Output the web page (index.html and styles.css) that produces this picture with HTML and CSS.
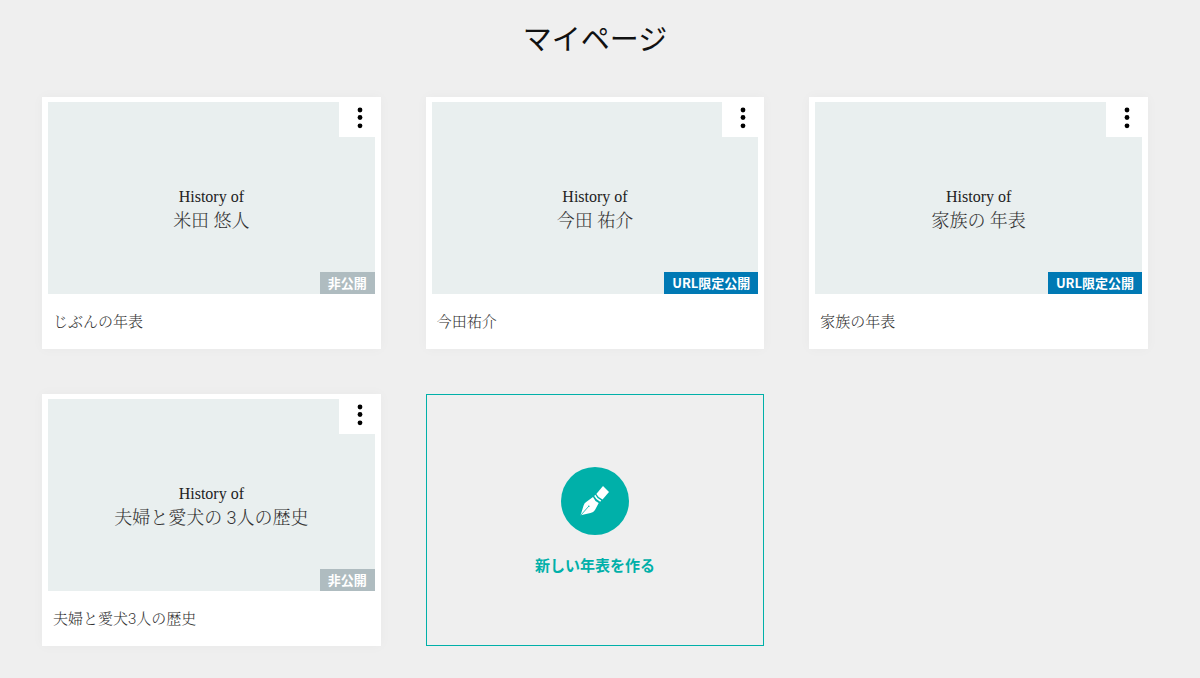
FILE: index.html
```html
<!DOCTYPE html>
<html lang="ja">
<head>
<meta charset="utf-8">
<meta name="viewport" content="width=device-width, initial-scale=1">
<title>マイページ</title>
<link rel="stylesheet" href="styles.css">
</head>
<body>
<main class="page">
  <h1 class="page-title">マイページ</h1>
  <div class="grid">
    <article class="card">
      <div class="thumb">
        <p class="thumb-label">History of</p>
        <p class="thumb-name">米田 悠人</p>
        <button class="menu" type="button" aria-label="メニュー"><svg class="dots" viewBox="0 0 6 22"><circle cx="3" cy="3" r="2.4"/><circle cx="3" cy="10.5" r="2.4"/><circle cx="3" cy="18.8" r="2.4"/></svg></button>
        <span class="badge">非公開</span>
      </div>
      <h2 class="caption">じぶんの年表</h2>
    </article>
    <article class="card">
      <div class="thumb">
        <p class="thumb-label">History of</p>
        <p class="thumb-name">今田 祐介</p>
        <button class="menu" type="button" aria-label="メニュー"><svg class="dots" viewBox="0 0 6 22"><circle cx="3" cy="3" r="2.4"/><circle cx="3" cy="10.5" r="2.4"/><circle cx="3" cy="18.8" r="2.4"/></svg></button>
        <span class="badge badge-url">URL限定公開</span>
      </div>
      <h2 class="caption">今田祐介</h2>
    </article>
    <article class="card">
      <div class="thumb">
        <p class="thumb-label">History of</p>
        <p class="thumb-name">家族の 年表</p>
        <button class="menu" type="button" aria-label="メニュー"><svg class="dots" viewBox="0 0 6 22"><circle cx="3" cy="3" r="2.4"/><circle cx="3" cy="10.5" r="2.4"/><circle cx="3" cy="18.8" r="2.4"/></svg></button>
        <span class="badge badge-url">URL限定公開</span>
      </div>
      <h2 class="caption">家族の年表</h2>
    </article>
    <article class="card">
      <div class="thumb">
        <p class="thumb-label">History of</p>
        <p class="thumb-name">夫婦と愛犬の 3人の歴史</p>
        <button class="menu" type="button" aria-label="メニュー"><svg class="dots" viewBox="0 0 6 22"><circle cx="3" cy="3" r="2.4"/><circle cx="3" cy="10.5" r="2.4"/><circle cx="3" cy="18.8" r="2.4"/></svg></button>
        <span class="badge">非公開</span>
      </div>
      <h2 class="caption">夫婦と愛犬3人の歴史</h2>
    </article>
    <a class="create" href="#new">
      <svg class="create-icon" viewBox="0 0 68 68" aria-hidden="true">
        <circle cx="34" cy="34" r="34" fill="#00b0a9"/>
        <path d="M42 19 48 25 41.5 32.5Q37.5 31 35.3 27Z" fill="#fff"/>
        <path d="M34.3 27.8Q36.2 31.8 40.3 33.5L39.2 34.7Q35 33 33.2 29Z" fill="#fff"/>
        <path d="M32 30Q33.5 34 37.7 36L34 43Q32.5 45.5 29.5 46L19.6 48.3 22.6 38.5Q23.3 36 25.5 34.8Z" fill="#fff"/>
        <path d="M20 48 27.5 39.5" fill="none" stroke="#00b0a9" stroke-width=".8"/>
        <circle cx="27.8" cy="39.2" r=".8" fill="#00b0a9"/>
      </svg>
      <span class="create-label">新しい年表を作る</span>
    </a>
  </div>
</main>
</body>
</html>
```
FILE: styles.css
```css
* {
  box-sizing: border-box;
}

body {
  margin: 0;
  background: #efefef;
  color: #111;
  font-family: "Noto Sans CJK JP", sans-serif;
}

.page {
  padding: 15px 52px 32px 42px;
}

.page-title {
  margin: 0 0 38px;
  font-size: 29px;
  line-height: 44px;
  font-weight: 400;
  text-align: center;
}

.grid {
  display: grid;
  grid-template-columns: repeat(3, minmax(0, 1fr));
  gap: 45px;
}

.card {
  display: flex;
  flex-direction: column;
  padding: 5px 6px 0;
  background: #fff;
  box-shadow: 0 0 12px rgba(0, 0, 0, 0.03);
}

.thumb {
  position: relative;
  display: flex;
  flex-direction: column;
  align-items: center;
  justify-content: center;
  min-height: 192px;
  padding-top: 22px;
  background: #e9efef;
}

.thumb-label,
.thumb-name {
  margin: 0;
  line-height: 24px;
}

.thumb-label {
  font-family: "Liberation Serif", serif;
  font-size: 16px;
  color: #222;
}

.thumb-name {
  font-family: Roboto, "Noto Serif CJK JP", "Noto Sans CJK JP", serif;
  font-size: 18px;
  font-weight: 300;
  color: #333;
}

.menu {
  position: absolute;
  top: 0;
  right: 0;
  display: flex;
  justify-content: center;
  width: 36px;
  height: 35px;
  padding: 5px 0 0 6px;
  border: 0;
  background: #fff;
  cursor: pointer;
}

.dots {
  width: 6px;
  height: 22px;
  fill: #000;
}

.badge {
  position: absolute;
  right: 0;
  bottom: 0;
  padding: 0 8px;
  background: #afbcc0;
  color: #fff;
  font-size: 13px;
  line-height: 22px;
  font-weight: 700;
}

.badge-url {
  background: #0079b4;
}

.caption {
  margin: 0;
  padding: 16px 5px 15px;
  font-family: Roboto, "Noto Serif CJK JP", "Noto Sans CJK JP", serif;
  font-size: 15px;
  line-height: 24px;
  font-weight: 300;
  color: #333;
}

.create {
  display: flex;
  flex-direction: column;
  align-items: center;
  justify-content: center;
  gap: 19px;
  padding-top: 2px;
  border: 1px solid #00b0a9;
  color: #00b0a9;
  text-decoration: none;
}

.create-icon {
  width: 68px;
  height: 68px;
}

.create-label {
  font-size: 15px;
  line-height: 22px;
  font-weight: 700;
}
```
